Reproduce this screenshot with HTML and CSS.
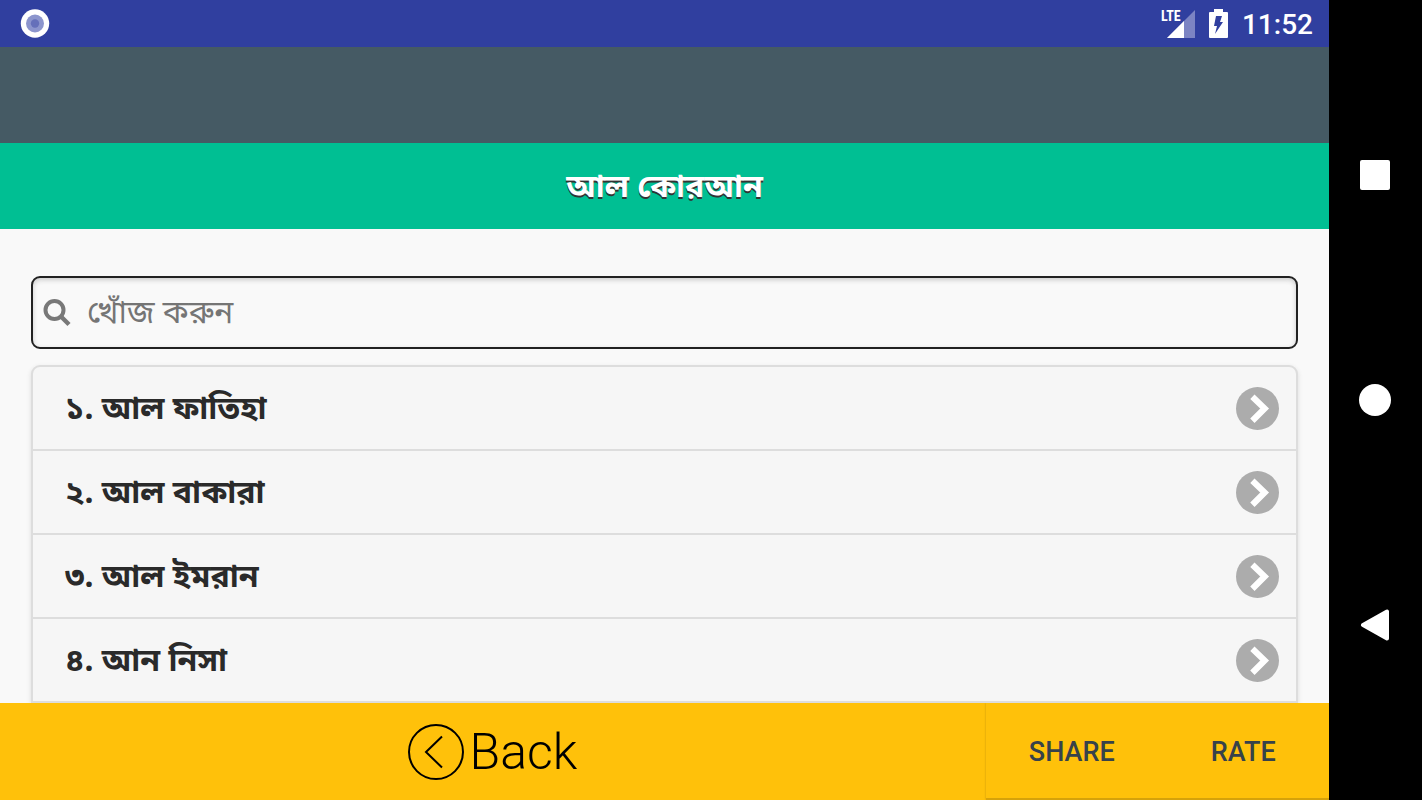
FILE: index.html
```
<!DOCTYPE html>
<html lang="bn">
<head>
<meta charset="utf-8">
<title>আল কোরআন</title>
<link rel="stylesheet" href="styles.css">
</head>
<body>
<div class="app">
  <div class="status">
    <svg class="dot" width="30" height="30" viewBox="0 0 30 30"><circle cx="15" cy="14.5" r="14.2" fill="#fff"/><circle cx="15" cy="14.5" r="9" fill="#8c95cd"/><circle cx="15" cy="14.5" r="4.2" fill="#6570ba"/></svg>
    <div class="indicators">
      <span class="signal"><span class="lte">LTE</span><svg width="28" height="28" viewBox="0 0 28 28"><path d="M28 0V28H0Z" fill="#7c84c3"/><path d="M17 11V28H0Z" fill="#fff"/></svg></span>
      <svg width="19" height="29" viewBox="0 0 19 29"><path d="M5 0h9v3h4q1 0 1 1v24q0 1-1 1H1q-1 0-1-1V4q0-1 1-1h4z" fill="#fff"/><path d="M7 7h6l-2 6h3L6 25l2-8H5z" fill="#303f9f"/></svg>
      <span class="clock">11:52</span>
    </div>
  </div>
  <div class="banner"></div>
  <header class="header"><h1>আল কোরআন</h1></header>
  <main class="content">
    <label class="search">
      <svg width="28" height="28" viewBox="0 0 28 28" fill="none" stroke="#787878"><circle cx="11.5" cy="11" r="9" stroke-width="4"/><path d="M18 17.500l8 8" stroke-width="4.500"/></svg>
      <input type="search" placeholder="খোঁজ করুন" aria-label="খোঁজ করুন">
    </label>
    <ul class="list">
      <li><a href="#1"><span>১. আল ফাতিহা</span><svg class="go" viewBox="0 0 42 42"><circle cx="21" cy="21" r="21" fill="#acacac"/><path d="M16 9.500l12 11.500-12 12" fill="none" stroke="#fff" stroke-width="6"/></svg></a></li>
      <li><a href="#2"><span>২. আল বাকারা</span><svg class="go" viewBox="0 0 42 42"><circle cx="21" cy="21" r="21" fill="#acacac"/><path d="M16 9.500l12 11.500-12 12" fill="none" stroke="#fff" stroke-width="6"/></svg></a></li>
      <li><a href="#3"><span>৩. আল ইমরান</span><svg class="go" viewBox="0 0 42 42"><circle cx="21" cy="21" r="21" fill="#acacac"/><path d="M16 9.500l12 11.500-12 12" fill="none" stroke="#fff" stroke-width="6"/></svg></a></li>
      <li><a href="#4"><span>৪. আন নিসা</span><svg class="go" viewBox="0 0 42 42"><circle cx="21" cy="21" r="21" fill="#acacac"/><path d="M16 9.500l12 11.500-12 12" fill="none" stroke="#fff" stroke-width="6"/></svg></a></li>
    </ul>
  </main>
  <footer class="footer">
    <button class="back"><svg width="56" height="56" viewBox="0 0 56 56" fill="none" stroke="#000" stroke-width="2"><circle cx="28" cy="28" r="27"/><path d="M34 12.500L18 28l16 15.500"/></svg>Back</button>
    <div class="actions"><button>SHARE</button><button>RATE</button></div>
  </footer>
</div>
<nav class="sysnav">
  <button aria-label="Recent"><svg width="32" height="32" viewBox="0 0 32 32"><rect x="1" y="1" width="30" height="30" rx="2" fill="#fff"/></svg></button>
  <button aria-label="Home"><svg width="32" height="32" viewBox="0 0 32 32"><circle cx="16" cy="16" r="16" fill="#fff"/></svg></button>
  <button aria-label="Back"><svg width="32" height="32" viewBox="0 0 32 32"><path d="M28 2.500V29.500L4 16Z" fill="#fff" stroke="#fff" stroke-width="4" stroke-linejoin="round"/></svg></button>
</nav>
</body>
</html>
```
FILE: styles.css
```
* { box-sizing: border-box; }
body { margin: 0; height: 100vh; display: flex; overflow: hidden; background: #000; font-family: "Noto Sans", "Noto Sans Bengali", sans-serif; }
button { border: 0; padding: 0; background: none; font: inherit; color: inherit; }
svg { display: block; flex: none; }
.app { flex: 1; display: flex; flex-direction: column; background: #f9f9f9; min-width: 0; }
.status { flex: none; height: 47px; padding: 0 16px 0 20px; display: flex; align-items: center; justify-content: space-between; background: #303f9f; color: #fff; }
.indicators { display: flex; align-items: center; gap: 14px; }
.signal { position: relative; }
.lte { position: absolute; left: -6px; top: -2px; font: 700 14px/16px "Roboto Condensed", "Liberation Sans Narrow", Roboto, sans-serif; }
.clock { padding-top: 2px; font: 500 28px/32px Roboto, sans-serif; }
.banner { flex: none; height: 96px; background: #455a64; }
.header { flex: none; height: 86px; padding-bottom: 2px; display: flex; align-items: center; justify-content: center; background: #00bf93; color: #fff; }
.header h1 { margin: 0; font-size: 32px; line-height: 40px; text-shadow: 0 2px 0 #333; }
.content { flex: 1; min-height: 0; overflow: hidden; padding: 47px 31px 0; }
.search { height: 73px; display: flex; align-items: center; gap: 16px; padding: 0 10px; border: 2px solid #222; border-radius: 9px; box-shadow: inset 0 2px 5px #ccc; }
.search input { flex: 1; min-width: 0; height: 56px; padding: 0 0 4px; border: 0; outline: 0; background: none; font: 32px/48px "Noto Sans", "Noto Sans Bengali", sans-serif; }
.search input::placeholder { color: #757575; }
.list { list-style: none; margin: 16px 0 0; padding: 0; border: 2px solid #ddd; border-radius: 9px 9px 0 0; background: #f6f6f6; box-shadow: 0 2px 5px #ddd; }
.list a { height: 82px; display: flex; align-items: center; justify-content: space-between; padding: 0 17px 0 32px; color: #2a2a2a; text-decoration: none; font-size: 32px; line-height: 48px; font-weight: 700; }
.list span { padding-bottom: 2px; }
.list li + li { border-top: 2px solid #ddd; }
.go { width: 43px; height: 43px; }
.footer { flex: none; height: 97px; display: flex; background: #ffc10a; }
.back { flex: 1; display: flex; align-items: center; justify-content: center; gap: 6px; padding-right: 1px; font: 300 50px/56px Roboto, sans-serif; color: #000; }
.actions { width: 343px; display: flex; padding-top: 2px; border-bottom: 2px solid #d6a20a; box-shadow: 0 0 2px #c6960c; clip-path: inset(0 0 0 -4px); }
.actions button { flex: 1; font: 500 27px/32px Roboto, sans-serif; color: #37424a; }
.sysnav { width: 93px; flex: none; display: flex; flex-direction: column; padding: 62px 2px 62px 0; }
.sysnav button { flex: 1; display: flex; align-items: center; justify-content: center; }
```
